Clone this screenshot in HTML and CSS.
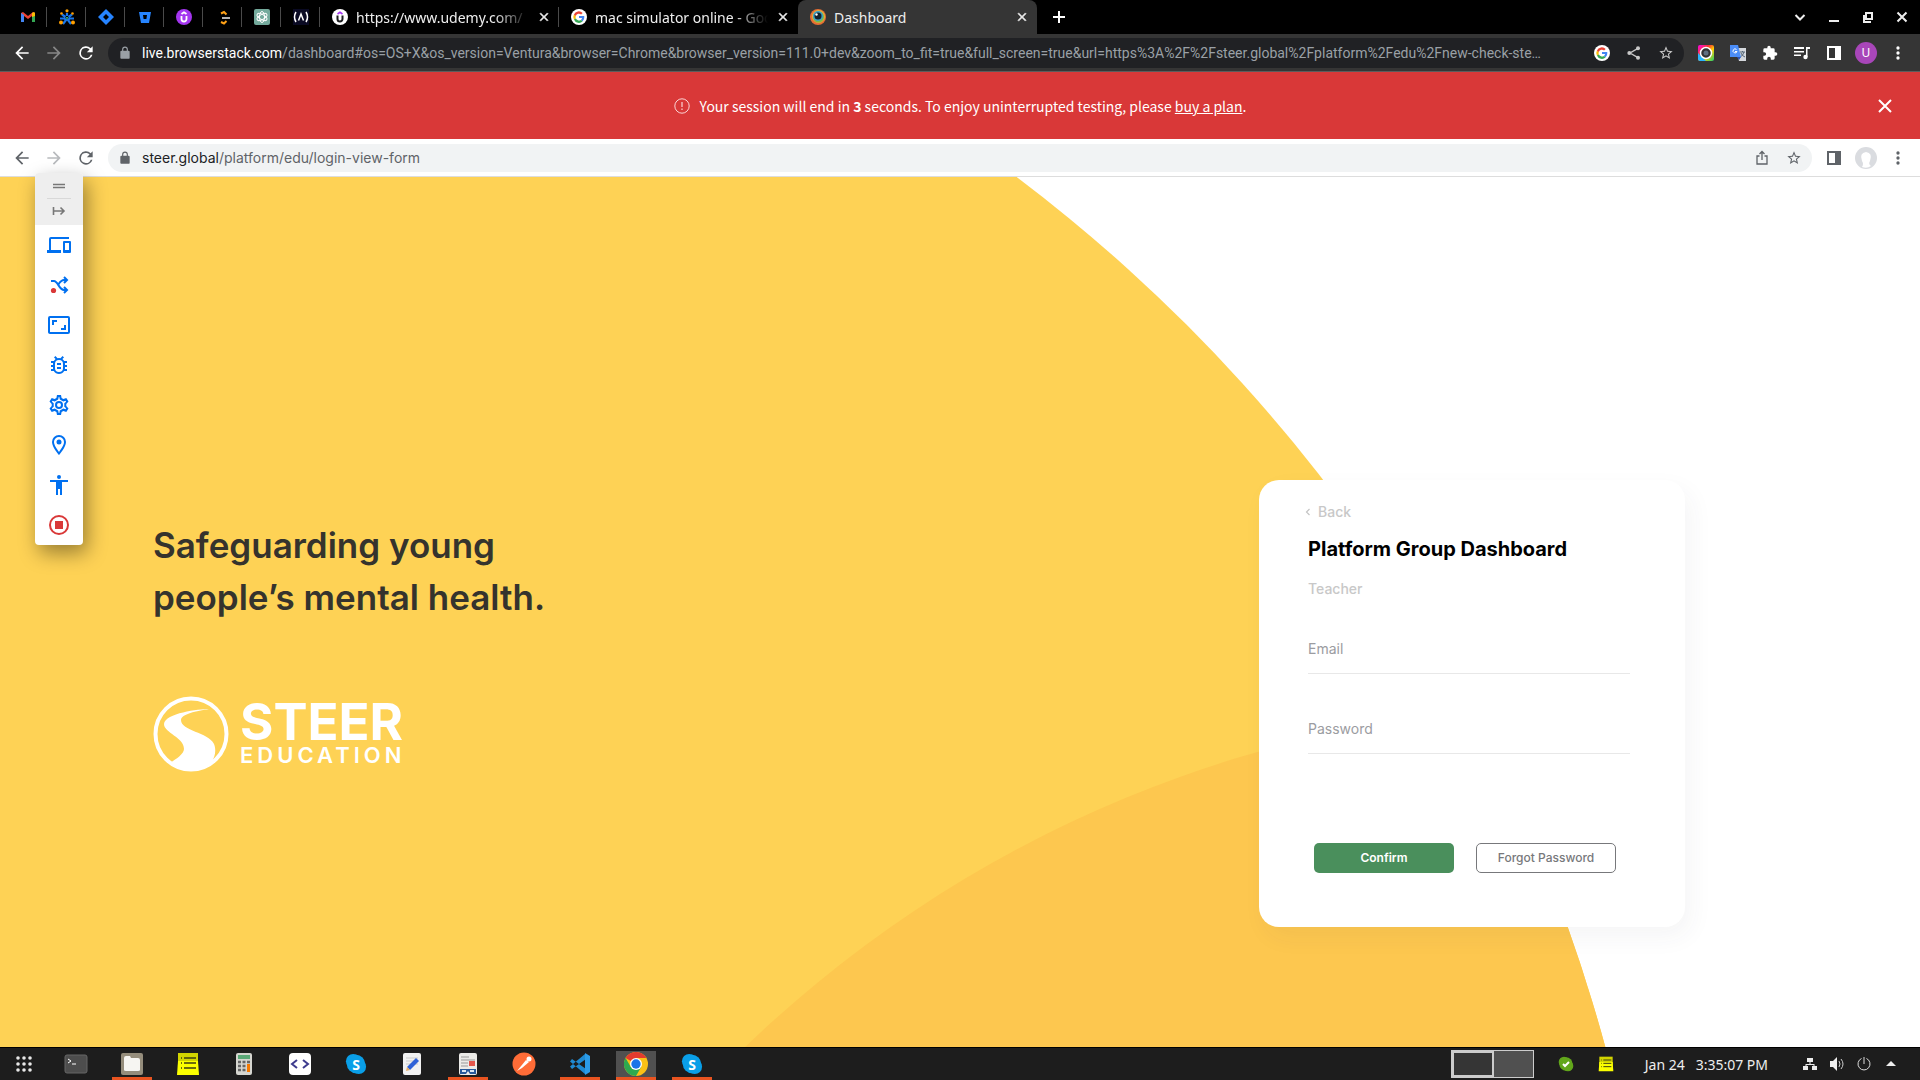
FILE: index.html
```html
<!DOCTYPE html>
<html lang="en">
<head>
<meta charset="utf-8">
<title>Dashboard</title>
<link rel="stylesheet" href="styles.css">
</head>
<body>
<svg class="defs" aria-hidden="true">
  <symbol id="back" viewBox="0 0 24 24"><path d="M20 11H7.8l5.6-5.6L12 4l-8 8 8 8 1.4-1.4L7.8 13H20z"/></symbol>
  <symbol id="fwd" viewBox="0 0 24 24"><path d="M12 4l-1.4 1.4 5.6 5.6H4v2h12.2l-5.6 5.6L12 20l8-8z"/></symbol>
  <symbol id="reload" viewBox="0 0 24 24"><path d="M17.65 6.35A8 8 0 1 0 19.73 14h-2.08A6 6 0 1 1 12 6c1.66 0 3.14.69 4.22 1.78L13 11h7V4z"/></symbol>
  <symbol id="lock" viewBox="0 0 24 24"><path d="M18 8h-1V6A5 5 0 0 0 7 6v2H6a2 2 0 0 0-2 2v10c0 1.100.9 2 2 2h12a2 2 0 0 0 2-2V10a2 2 0 0 0-2-2zM9 6a3 3 0 0 1 6 0v2H9z"/></symbol>
  <symbol id="close" viewBox="0 0 24 24"><path d="M19 6.400 17.600 5 12 10.600 6.400 5 5 6.400 10.600 12 5 17.600 6.400 19 12 13.400 17.600 19 19 17.600 13.400 12z" stroke="currentColor"/></symbol>
  <symbol id="star" viewBox="0 0 24 24"><path d="M22 9.240l-7.190-.62L12 2 9.190 8.630 2 9.240l5.460 4.730L5.820 21 12 17.270 18.180 21l-1.630-7.030L22 9.240zM12 15.400l-3.760 2.270 1-4.280-3.320-2.880 4.380-.38L12 6.100l1.710 4.040 4.380.38-3.320 2.880 1 4.280L12 15.400z"/></symbol>
  <symbol id="dots" viewBox="0 0 24 24"><path d="M12 8a2 2 0 1 0 0-4 2 2 0 0 0 0 4zm0 2a2 2 0 1 0 0 4 2 2 0 0 0 0-4zm0 6a2 2 0 1 0 0 4 2 2 0 0 0 0-4z"/></symbol>
  <symbol id="panel" viewBox="0 0 16 16"><path fill-rule="evenodd" d="M1 1h14v14H1zM3 3v10h6V3z"/></symbol>
  <symbol id="google" viewBox="0 0 16 16"><circle cx="8" cy="8" r="8" fill="#fff"/><path d="M8 6.900v2.200h3.100A2.800 2.800 0 0 1 9.900 10.900l1.700 1.400c1-1 1.700-2.400 1.700-4.200l-.1-1.200z" fill="#4285f4"/><path d="M4.800 9.300l-1.900 1.200A5.400 5.400 0 0 0 11.700 12.300L9.900 10.900a3.400 3.400 0 0 1-5.100-1.600z" fill="#34a853"/><path d="M2.900 5.600a5.400 5.400 0 0 0 0 4.900l1.900-1.200a3.500 3.500 0 0 1 0-2.400z" fill="#fbbc05"/><path d="M2.900 5.600A5.400 5.400 0 0 1 11.700 4L10.100 5.500A3.300 3.300 0 0 0 4.800 6.900z" fill="#ea4335"/></symbol>
  <symbol id="skype" viewBox="0 0 24 24"><circle cx="9" cy="9" r="8"/><circle cx="15" cy="15" r="8"/><circle cx="12" cy="12" r="10"/></symbol>
  <symbol id="notes" viewBox="0 0 24 24"><path d="M2 1h20v15H2z" fill="#d2d400"/><path d="M2 9h20l1 14H1z" fill="#fbff00"/><path d="M5 6h1M5 11h1M5 16h1M8 6h12M8 11h12M8 16h12" stroke="#3e3e10" stroke-width="1.500"/></symbol>
</svg>

<header class="browser">
  <nav class="tabs" aria-label="Tabs">
    <a class="pin" href="#"><svg viewBox="0 0 16 16"><path d="M1 4v9h3V7l4 3 4-3v6h3V4l-2-1-5 4-5-4z" fill="#ea4335"/><path d="M1 4v9h3V6z" fill="#4285f4"/><path d="M15 4v9h-3V6z" fill="#34a853"/><path d="M12 4l2-1 1 1v3l-3 1z" fill="#fbbc04"/></svg></a>
    <a class="pin" href="#"><svg viewBox="0 0 16 16"><path d="M8 4v3M3 5.500l3.500 2.500M13 5.500L9.500 8M1 9.500h4.500L7 11l-3 4M15 9.500h-4.500L9 11l3 4" stroke="#1976e8" stroke-width="2.200" fill="none"/><path d="M6.500 8h3L8 11z" fill="#2f9e6e"/><g fill="#ffa000"><circle cx="8" cy="1.800" r="1.600"/><circle cx="2.500" cy="4.500" r="1.300"/><circle cx="13.500" cy="4.500" r="1.300"/><circle cx="2" cy="13.500" r="2"/><circle cx="14" cy="13.500" r="2"/></g></svg></a>
    <a class="pin" href="#"><svg viewBox="0 0 16 16"><path fill-rule="evenodd" fill="#2684ff" d="M8 0l8 8-8 8-8-8zM8 5L5 8l3 3 3-3z"/></svg></a>
    <a class="pin" href="#"><svg viewBox="0 0 16 16"><path fill-rule="evenodd" fill="#2684ff" d="M2 3h12l-2 11H4zM6 6l.6 4h2.800L10 6z"/></svg></a>
    <a class="pin" href="#"><svg viewBox="0 0 16 16"><circle cx="8" cy="8" r="8" fill="#a435f0"/><path d="M5.500 5L8 3.300 10.500 5M5.500 7v3a2.500 2.500 0 0 0 5 0V7" fill="none" stroke="#fff" stroke-width="1.800"/></svg></a>
    <a class="pin" href="#"><svg viewBox="0 0 16 16"><g fill="none" stroke-width="2"><path d="M6 4.500l3-1.500 2.500 2.500M6 13l3 1.500 2.500-2.500" stroke="#ffa116"/><path d="M7 9h8" stroke="#b3b3b3"/></g></svg></a>
    <a class="pin" href="#"><svg viewBox="0 0 16 16"><rect width="16" height="16" rx="2" fill="#74aa9c"/><g fill="none" stroke="#fff"><ellipse cx="8" cy="8" rx="2.500" ry="5.500"/><ellipse cx="8" cy="8" rx="2.500" ry="5.500" transform="rotate(60 8 8)"/><ellipse cx="8" cy="8" rx="2.500" ry="5.500" transform="rotate(120 8 8)"/></g></svg></a>
    <a class="pin" href="#"><svg viewBox="0 0 16 16"><path fill="#0a0a23" d="M0 0h16v16H0z"/><path d="M3 3q-3 5 0 10M13 3q3 5 0 10M5.500 11.500L8 5l2.500 6.500" fill="none" stroke="#fff" stroke-width="1.500"/></svg></a>
    <div class="tab">
      <svg viewBox="0 0 16 16"><circle cx="8" cy="8" r="8" fill="#fff"/><path d="M5.500 5L8 3.300 10.500 5" fill="none" stroke="#a435f0" stroke-width="1.600"/><path d="M5.500 6.500V10a2.500 2.500 0 0 0 5 0V6.500" fill="none" stroke="#1c1d1f" stroke-width="2"/></svg>
      <a href="#" class="fade">https://www.udemy.com/</a>
      <button aria-label="Close tab"><svg viewBox="0 0 24 24"><use href="#close"/></svg></button>
    </div>
    <div class="tab">
      <svg><use href="#google"/></svg>
      <a href="#" class="fade">mac simulator online - Goo</a>
      <button aria-label="Close tab"><svg viewBox="0 0 24 24"><use href="#close"/></svg></button>
    </div>
    <div class="tab active">
      <svg viewBox="0 0 16 16"><circle cx="8" cy="8" r="8" fill="#e66f32"/><circle cx="8.500" cy="7.500" r="6.500" fill="#e2b03a"/><circle cx="8.500" cy="8" r="5.500" fill="#79b849"/><circle cx="8" cy="7" r="5" fill="#3b9fc9"/><circle cx="8" cy="7" r="3.500" fill="#13202b"/><circle cx="6.500" cy="5.500" r="1.200" fill="#fff"/></svg>
      <a href="#">Dashboard</a>
      <button aria-label="Close tab"><svg viewBox="0 0 24 24"><use href="#close"/></svg></button>
    </div>
    <button class="newtab" aria-label="New tab"><svg viewBox="0 0 12 12"><path d="M6 0v12M0 6h12" stroke="#fff" stroke-width="2"/></svg></button>
    <div class="window">
      <button aria-label="Search tabs"><svg viewBox="0 0 14 14"><path d="M2.500 5l4.500 4.500L11.500 5" fill="none" stroke="#eee" stroke-width="2"/></svg></button>
      <button aria-label="Minimize"><svg viewBox="0 0 14 14"><path d="M2 11h10" stroke="#eee" stroke-width="2"/></svg></button>
      <button aria-label="Restore"><svg viewBox="0 0 14 14"><path d="M5 3h6v6H5zM3 5v7h7" fill="none" stroke="#eee" stroke-width="2"/></svg></button>
      <button aria-label="Close window"><svg viewBox="0 0 14 14"><path d="M2.500 2.500l9 9M11.500 2.500l-9 9" stroke="#eee" stroke-width="2"/></svg></button>
    </div>
  </nav>

  <div class="bar dark">
    <button aria-label="Back"><svg><use href="#back"/></svg></button>
    <button class="dim" aria-label="Forward"><svg><use href="#fwd"/></svg></button>
    <button aria-label="Reload"><svg><use href="#reload"/></svg></button>
    <div class="address">
      <svg class="lock"><use href="#lock"/></svg>
      <div class="url"><b>live.browserstack.com</b>/dashboard#os=OS+X&amp;os_version=Ventura&amp;browser=Chrome&amp;browser_version=111.0+dev&amp;zoom_to_fit=true&amp;full_screen=true&amp;url=https%3A%2F%2Fsteer.global%2Fplatform%2Fedu%2Fnew-check-ste…</div>
      <button aria-label="Google"><svg class="s16"><use href="#google"/></svg></button>
      <button class="soft" aria-label="Share"><svg class="s16" viewBox="0 0 24 24"><path d="M18 5L6 12l12 7" fill="none" stroke="currentColor" stroke-width="2"/><circle cx="18" cy="5" r="3"/><circle cx="5" cy="12" r="3"/><circle cx="18" cy="19" r="3"/></svg></button>
      <button class="soft" aria-label="Bookmark"><svg class="s16"><use href="#star"/></svg></button>
    </div>
    <button aria-label="Camera"><svg class="s16" viewBox="0 0 16 16"><defs><linearGradient id="rb" x2="1" y2="1"><stop stop-color="#f0e"/><stop offset=".35" stop-color="#f83232"/><stop offset=".6" stop-color="#ffd000"/><stop offset="1" stop-color="#20d070"/></linearGradient></defs><rect width="16" height="16" rx="2" fill="url(#rb)"/><path d="M0 8l8 8H2a2 2 0 0 1-2-2z" fill="#28b5ff"/><circle cx="8" cy="8" r="5.500" fill="#333" stroke="#fff" stroke-width="1.500"/><circle cx="8" cy="8" r="2.500" fill="#607080"/></svg></button>
    <button aria-label="Translate"><svg class="s16" viewBox="0 0 16 16"><path d="M6 3h10v13H9z" fill="#d5d8dc"/><path d="M10 7h5M12.500 6v1M14 7q-1 4-4 5M11 8q1 3 4 4" stroke="#567" fill="none"/><path d="M0 0h8l3 12H0z" fill="#4b8df8"/><path d="M7 12h4l-2 3z" fill="#2b51b5"/><path d="M6.500 4.500A2 2 0 1 0 7 6.500H5" stroke="#fff" fill="none"/></svg></button>
    <button aria-label="Extensions"><svg class="s16" viewBox="0 0 24 24"><path d="M20.500 11H19V7a2 2 0 0 0-2-2h-4V3.500a2.500 2.500 0 0 0-5 0V5H4a2 2 0 0 0-2 2v3.800h1.500a2.700 2.700 0 0 1 0 5.400H2V20c0 1.100.9 2 2 2h3.800v-1.500a2.700 2.700 0 0 1 5.400 0V22H17a2 2 0 0 0 2-2v-4h1.500a2.500 2.500 0 0 0 0-5z"/></svg></button>
    <button aria-label="Media"><svg class="s16" viewBox="0 0 16 16"><path d="M0 2h10v2H0zM0 6h10v1.600H0zM0 9.500h7v1.600H0zM12 2h4v2h-2.500v8H12z"/><circle cx="11.500" cy="12" r="2.200"/></svg></button>
    <button aria-label="Side panel"><svg class="s16"><use href="#panel"/></svg></button>
    <button class="avatar" aria-label="Profile">U</button>
    <button aria-label="Menu"><svg><use href="#dots"/></svg></button>
  </div>
</header>

<section class="alert" role="alert">
  <svg viewBox="0 0 16 16"><circle cx="8" cy="8" r="7.200" fill="none" stroke="#fbd5d5"/><path d="M8 4v5M8 10.500v1.500" stroke="#fbd5d5" stroke-width="1.200"/></svg>
  <p>Your session will end in <strong>3</strong> seconds. To enjoy uninterrupted testing, please <a href="#">buy a plan</a>.</p>
  <button aria-label="Dismiss"><svg viewBox="0 0 14 14"><path d="M1 1l12 12M13 1L1 13" stroke="#fff" stroke-width="2"/></svg></button>
</section>

<div class="bar light">
  <button aria-label="Back"><svg><use href="#back"/></svg></button>
  <button class="dim" aria-label="Forward"><svg><use href="#fwd"/></svg></button>
  <button aria-label="Reload"><svg><use href="#reload"/></svg></button>
  <div class="address">
    <svg class="lock"><use href="#lock"/></svg>
    <div class="url"><b>steer.global</b>/platform/edu/login-view-form</div>
    <button aria-label="Share"><svg class="s16" viewBox="0 0 16 16"><path d="M5.500 6H3v8h10V6h-2.500M8 10V2M5.500 4L8 1.500 10.500 4" fill="none" stroke="currentColor" stroke-width="1.300"/></svg></button>
    <button aria-label="Bookmark"><svg class="s16"><use href="#star"/></svg></button>
  </div>
  <button aria-label="Side panel"><svg class="s16"><use href="#panel"/></svg></button>
  <button class="avatar blank" aria-label="Guest"><svg viewBox="0 0 22 22"><path d="M7 20q2-3 0-6-3-8 4-9 7 1 4 9-2 3 1 5-4 3-9 1z" fill="#fff"/></svg></button>
  <button aria-label="Menu"><svg><use href="#dots"/></svg></button>
</div>

<main class="page">
  <svg class="backdrop" viewBox="0 0 1920 870" preserveAspectRatio="xMinYMin slice" aria-hidden="true">
    <clipPath id="sun"><circle cx="40" cy="1295" r="1622"/></clipPath>
    <circle cx="40" cy="1295" r="1622" fill="#fed255"/>
    <circle cx="1593" cy="1750" r="1222" fill="#fdc74f" clip-path="url(#sun)"/>
  </svg>

  <aside class="toolbox">
    <div class="grip">
      <svg viewBox="0 0 24 24"><path d="M6 10.500h12M6 13.500h12" stroke="#777" stroke-width="1.500"/></svg>
      <button aria-label="Dock"><svg viewBox="0 0 24 24"><path d="M6.500 8v8M7 12h10M13.500 8.500L17 12l-3.500 3.500" fill="none" stroke="#777" stroke-width="1.600"/></svg></button>
    </div>
    <button aria-label="Devices"><svg viewBox="0 0 24 24"><path d="M4 6h18V4H4a2 2 0 0 0-2 2v11H0v3h14v-3H4zm19 2h-6a1 1 0 0 0-1 1v10c0 .6.400 1 1 1h6a1 1 0 0 0 1-1V9a1 1 0 0 0-1-1zm-1 9h-4v-7h4z"/></svg></button>
    <button aria-label="Switch"><svg viewBox="0 0 24 24"><path d="M4 8h3c4 0 5 9 10 9h2M11 12c2-3 3-5 6-5h2M17 4l3 3-3 3M17 14l3 3-3 3" fill="none" stroke="currentColor" stroke-width="2"/><circle cx="6.500" cy="17.500" r="2.600" fill="#d93838"/></svg></button>
    <button aria-label="Resolution"><svg viewBox="0 0 24 24"><path d="M19 12h-2v3h-3v2h5zM7 9h3V7H5v5h2zm14-6H3a2 2 0 0 0-2 2v14c0 1.100.9 2 2 2h18a2 2 0 0 0 2-2V5a2 2 0 0 0-2-2zm0 16H3V5h18z"/></svg></button>
    <button aria-label="Bug report"><svg viewBox="0 0 24 24"><path d="M20 8h-2.810a5.990 5.990 0 0 0-1.820-1.960L17 4.410 15.590 3l-2.170 2.170a6 6 0 0 0-2.840 0L8.410 3 7 4.410l1.620 1.630C7.880 6.550 7.260 7.220 6.810 8H4v2h2.090c-.05.33-.09.66-.09 1v1H4v2h2v1c0 .34.040.67.090 1H4v2h2.810a6 6 0 0 0 10.380 0H20v-2h-2.090c.05-.33.090-.66.090-1v-1h2v-2h-2v-1c0-.34-.04-.67-.09-1H20V8zm-4 7a4 4 0 0 1-8 0v-4a4 4 0 0 1 8 0v4zm-6-1h4v2h-4zm0-4h4v2h-4z"/></svg></button>
    <button aria-label="Settings"><svg viewBox="0 0 24 24"><path fill-rule="evenodd" d="M10 2h4l.6 3 1.800 1 2.900-1 2.200 3.500L19.300 11v2l2.200 2.500-2.200 3.500-2.900-1-1.800 1-.6 3h-4l-.6-3-1.800-1-2.900 1-2.200-3.500L4.700 13v-2L2.500 8.500 4.700 5l2.900 1 1.800-1zM11.700 4l-.5 2.500-3.500 2L5.500 7.700l-.6 1L6.700 10.300v3.400L4.900 15.300l.6 1 2.200-.8 3.500 2 .5 2.500h.6l.5-2.500 3.500-2 2.200.8.6-1-1.800-1.600v-3.400l1.800-1.600-.6-1-2.200.8-3.500-2L12.300 4z"/><circle cx="12" cy="12" r="3" fill="none" stroke="currentColor" stroke-width="2"/></svg></button>
    <button aria-label="Location"><svg viewBox="0 0 24 24"><path d="M12 2a7 7 0 0 0-7 7c0 5.250 7 13 7 13s7-7.750 7-13a7 7 0 0 0-7-7zM7 9a5 5 0 0 1 10 0c0 2.880-2.880 7.190-5 9.880C9.920 16.210 7 11.850 7 9z"/><circle cx="12" cy="9" r="2.500"/></svg></button>
    <button aria-label="Accessibility"><svg viewBox="0 0 24 24"><path d="M12 2a2 2 0 1 1 0 4 2 2 0 0 1 0-4zm9 7h-6v13h-2v-6h-2v6H9V9H3V7h18z"/></svg></button>
    <button aria-label="Stop session"><svg viewBox="0 0 24 24" fill="#d93838"><circle cx="12" cy="12" r="9" fill="none" stroke="#d93838" stroke-width="2"/><path d="M8 8h8v8H8z"/></svg></button>
  </aside>

  <section class="brand">
    <h1>Safeguarding young<br>people’s mental health.</h1>
    <div class="logo">
      <svg viewBox="0 0 76 76" aria-hidden="true"><circle cx="38" cy="38" r="35.500" fill="none" stroke="#fff" stroke-width="4"/><path d="M56 13C46 13 12 17 11 28c0 9 20 13 20 25 0 5-8 10-14 14 9 8 30 10 41 0 5-7 5-14 3-19C55 36 28 35 28 24c0-6 16-9 28-11z" fill="#fff"/></svg>
      <p><span class="steer">STEER</span><span class="edu">EDUCATION</span></p>
    </div>
  </section>

  <form class="card">
    <a class="back" href="#"><svg viewBox="0 0 6 8"><path d="M4.500 1L1.500 4l3 3" fill="none" stroke="#c4c4c4" stroke-width="1.200"/></svg>Back</a>
    <h2>Platform Group Dashboard</h2>
    <p class="role">Teacher</p>
    <div class="field"><label for="email">Email</label><input id="email" type="email"></div>
    <div class="field"><label for="password">Password</label><input id="password" type="password"></div>
    <div class="actions">
      <button class="confirm" type="submit">Confirm</button>
      <button class="forgot" type="button">Forgot Password</button>
    </div>
  </form>
</main>

<footer class="taskbar">
  <div class="apps">
    <button aria-label="Show applications"><svg viewBox="0 0 24 24" fill="#e8e8e8"><g id="r"><circle cx="6" cy="6" r="1.800"/><circle cx="12" cy="6" r="1.800"/><circle cx="18" cy="6" r="1.800"/></g><use href="#r" y="6"/><use href="#r" y="12"/></svg></button>
    <button aria-label="Terminal"><svg viewBox="0 0 24 24"><rect x="1" y="3" width="22" height="18" rx="2" fill="#4d4d4d" stroke="#666"/><path d="M4 7l3 2-3 2M8 12h4" fill="none" stroke="#fff"/></svg></button>
    <button class="open" aria-label="Files"><svg viewBox="0 0 24 24"><rect x="1" y="1" width="22" height="22" rx="2" fill="#958d7c"/><path d="M4 6q0-2 2-2h4l1 2h7q2 0 2 2v10q0 1-2 1H6q-2 0-2-1z" fill="#f6f5f2"/></svg></button>
    <button aria-label="Notes"><svg><use href="#notes"/></svg></button>
    <button aria-label="Calculator"><svg viewBox="0 0 24 24"><rect x="4" y="1" width="16" height="22" rx="2" fill="#d6d6d0"/><path d="M6 3h12v4H6z" fill="#5aa876"/><path d="M6 10h3M10.500 10h3M15 10h3M6 14h3M10.500 14h3M6 18h3M10.500 18h3" stroke="#666" stroke-width="2.500"/><path d="M15 12h3v8h-3z" fill="#f57900"/></svg></button>
    <button aria-label="Code editor"><svg viewBox="0 0 24 24"><rect x="1" y="1" width="22" height="22" rx="4" fill="#fff"/><path d="M9 8l-5 4 5 4M15 8l5 4-5 4" fill="none" stroke="#3d3b8e" stroke-width="2"/></svg></button>
    <button class="letter" aria-label="Skype"><svg fill="#0a9fe8"><use href="#skype"/></svg><span>S</span></button>
    <button aria-label="Text editor"><svg viewBox="0 0 24 24"><rect x="3" y="1" width="18" height="22" rx="2" fill="#f2f2f2"/><path d="M6 6h12M6 9h12M6 12h12" stroke="#ccc"/><path d="M16 6l3 3-9 9-3-3z" fill="#2f62d8"/><path d="M7 15l3 3-4 1z" fill="#e5ad68"/></svg></button>
    <button class="open" aria-label="Document viewer"><svg viewBox="0 0 24 24"><rect x="3" y="1" width="18" height="22" rx="2" fill="#ecebe8"/><path d="M5 5h8M5 8h14M5 11h7M5 14h7" stroke="#999"/><path d="M13 9h6v5h-6z" fill="#e4574c"/><path d="M4 17h16v5h-6l-2-3-2 3H4z" fill="#285a9b"/><path d="M6 19h4M14 19h4" stroke="#dbe8f5" stroke-width="2"/></svg></button>
    <button aria-label="Postman"><svg viewBox="0 0 24 24"><circle cx="12" cy="12" r="11.500" fill="#ff6c37"/><path d="M5 19l9-11 3 2-7 6z" fill="#fff"/><circle cx="17" cy="7" r="2.500" fill="#fff"/></svg></button>
    <button class="open" aria-label="Visual Studio Code"><svg viewBox="0 0 24 24"><path d="M17 2L2 14.500 4 17 18 7M17 22L2 9.500 4 7l14 10" fill="#1f8ad2"/><path d="M17 1l5 3v16l-5 3z" fill="#2b9be8"/></svg></button>
    <button class="open current" aria-label="Chrome"><svg viewBox="0 0 24 24"><circle cx="12" cy="12" r="12" fill="#fbc116"/><path d="M12 12L1.600 6A12 12 0 0 1 22.400 6H12z" fill="#e33b2e"/><path d="M1.600 6A12 12 0 0 0 12 24l5.200-9L12 12 6.800 15z" fill="#2da94f"/><circle cx="12" cy="12" r="6" fill="#fff"/><circle cx="12" cy="12" r="4.700" fill="#1a73e8"/></svg></button>
    <button class="open letter" aria-label="Skype window"><svg fill="#0a9fe8"><use href="#skype"/></svg><span>S</span></button>
  </div>
  <div class="tray">
    <div class="desks"><button class="on" aria-label="Workspace 1"></button><button aria-label="Workspace 2"></button></div>
    <button class="status" aria-label="Skype status"><svg fill="#62a61b"><use href="#skype"/></svg><svg class="check" viewBox="0 0 16 16"><path d="M5 8l2 2 4-4" fill="none" stroke="#fff" stroke-width="2"/></svg></button>
    <button class="status" aria-label="Notes indicator"><svg><use href="#notes"/></svg></button>
    <time>Jan 24&nbsp;&nbsp; 3:35:07 PM</time>
    <button aria-label="Network"><svg viewBox="0 0 16 16" fill="#eee"><path d="M5 2h6v4H5zM1 10h5v4H1zM10 10h5v4h-5zM7.500 6h1v2h4v2h-1V9h-7v1h-1V8h4z"/></svg></button>
    <button aria-label="Volume"><svg viewBox="0 0 16 16" fill="#eee"><path d="M1 5h3l4-4v14l-4-4H1z"/><path d="M10 5q2 3 0 6M12 3q4 5 0 10" fill="none" stroke="#ccc"/></svg></button>
    <button aria-label="Power"><svg viewBox="0 0 16 16" fill="none" stroke="#ddd"><path d="M5.500 2.500a6 6 0 1 0 5 0M8 1v7"/></svg></button>
    <button aria-label="System menu"><svg viewBox="0 0 16 16" fill="#eee"><path d="M3 10l5-5 5 5z"/></svg></button>
  </div>
</footer>
</body>
</html>
```
FILE: styles.css
```css
* { box-sizing: border-box; }
body { margin: 0; min-height: 100vh; display: flex; flex-direction: column; background: #fff; font-family: "Noto Sans", sans-serif; font-size: 14px; }
button { border: 0; padding: 0; background: none; color: inherit; font: inherit; display: flex; align-items: center; justify-content: center; }
a { color: inherit; text-decoration: none; }
h1, h2, p { margin: 0; }
svg { display: block; flex: none; }
svg:not([fill]) { fill: currentColor; }
.defs { position: absolute; width: 0; height: 0; }

/* tab strip */
.tabs { display: flex; height: 34px; padding-left: 8px; background: #000; color: #eee; }
.pin { width: 39px; display: flex; align-items: center; justify-content: center; position: relative; }
.pin svg, .tab > svg { width: 16px; height: 16px; }
.pin::after, .tab:not(.active):not(:has(+ .active))::after { content: ""; position: absolute; right: 0; top: 7px; width: 1px; height: 20px; background: #4a4a4a; }
.tab { width: 239px; display: flex; align-items: center; gap: 8px; padding: 0 8px 0 12px; position: relative; }
.tab a { flex: 1; min-width: 0; overflow: hidden; white-space: nowrap; }
.tab button svg { width: 14px; height: 14px; }
.fade { mask-image: linear-gradient(90deg, #000 80%, transparent); }
.active { background: #353535; border-radius: 8px 8px 0 0; }
.newtab { width: 44px; }
.newtab svg { width: 12px; height: 12px; }
.window { margin-left: auto; display: flex; gap: 20px; padding-right: 11px; }
.window svg { width: 14px; height: 14px; }

/* address bars */
.bar { display: flex; align-items: center; padding: 0 6px; }
.bar > button { width: 32px; height: 32px; }
.bar svg { width: 20px; height: 20px; }
.bar .s16 { width: 16px; height: 16px; }
.bar .lock { width: 14px; height: 14px; margin: 0 10px; }
.dark { height: 38px; background: #353535; border-bottom: 1px solid #5c5c5c; color: #fff; }
.dark .dim { color: #888; }
.address { flex: 1; min-width: 0; display: flex; align-items: center; height: 30px; border-radius: 15px; margin: 0 6px; padding-right: 2px; }
.address button { width: 32px; height: 30px; }
.dark .address { background: #202124; color: #9aa0a6; font-family: Roboto, sans-serif; font-size: 14px; }
.dark .soft { color: #c8c8c8; }
.url { flex: 1; min-width: 0; overflow: hidden; text-overflow: ellipsis; white-space: nowrap; }
.url b { font-weight: 400; color: #fff; }
.bar .avatar { width: 22px; height: 22px; margin: 0 5px; border-radius: 50%; background: #a846b9; font-size: 12px; }
.light { height: 38px; background: #fff; color: #5f6368; border-bottom: 1px solid #ddd; }
.light .dim { color: #b8babd; }
.light .address { height: 28px; background: #f1f3f4; font-family: Inter, sans-serif; font-size: 14px; }
.light .url b { color: #202124; }
.bar .blank { background: #dadce0; }
.bar .blank svg { width: 22px; height: 22px; }

/* session notice */
.alert { position: relative; height: 67px; display: flex; align-items: center; justify-content: center; gap: 10px; background: #d93838; color: #fff; font-family: "Noto Sans CJK SC", sans-serif; font-size: 14px; }
.alert a { text-decoration: underline; }
.alert > svg { width: 16px; height: 16px; }
.alert button { position: absolute; right: 28px; top: 27px; }
.alert button svg { width: 14px; height: 14px; }

/* remote page */
.page { position: relative; flex: 1; display: flex; justify-content: space-between; align-items: flex-start; padding: 303px 235px 120px 153px; font-family: Inter, sans-serif; }
.backdrop { position: absolute; inset: 0; width: 100%; height: 100%; }
.toolbox { position: absolute; left: 35px; top: -4px; width: 48px; border-radius: 4px; background: #fff; color: #0070f0; box-shadow: 4px 8px 20px rgba(0, 0, 0, .4); }
.toolbox > button { width: 48px; height: 40px; }
.toolbox > button svg { width: 24px; height: 24px; }
.grip { height: 52px; display: flex; flex-direction: column; align-items: center; padding-top: 1px; background: #eee; border-radius: 4px 4px 0 0; }
.grip svg { width: 24px; height: 24px; }
.grip button { border-top: 1px solid #d8d8d8; }
.brand { position: relative; padding-top: 39px; }
.brand h1 { font-size: 35px; line-height: 52px; font-weight: 600; color: #35332d; }
.logo { display: flex; gap: 11px; margin-top: 73px; color: #fff; }
.logo svg { width: 76px; height: 76px; }
.logo p { display: flex; flex-direction: column; padding-top: 7px; }
.steer { font-size: 51px; line-height: 38px; font-weight: 700; }
.edu { font-size: 22px; line-height: 28px; font-weight: 600; letter-spacing: 4px; }
.card { position: relative; width: 426px; height: 447px; padding: 22px 55px 0 49px; display: flex; flex-direction: column; background: #fff; border-radius: 20px; box-shadow: 6px 10px 24px rgba(60, 60, 80, .05); color: #c8c8c8; font-size: 14px; line-height: 20px; }
.back { display: flex; align-items: center; gap: 7px; font-weight: 500; }
.back svg { width: 6px; height: 8px; margin-left: -3px; }
.card h2 { margin-top: 13px; font-size: 20px; line-height: 28px; font-weight: 700; color: #000; }
.role { margin-top: 16px; font-weight: 500; }
.field { display: grid; margin-top: 25px; }
.field + .field { margin-top: 30px; }
.field label, .field input { grid-area: 1 / 1; }
.field label { z-index: 1; align-self: center; justify-self: start; color: #9b9ca1; pointer-events: none; }
.field input { height: 50px; padding: 0; border: 0; border-bottom: 1px solid #e8e8e8; background: none; font: 400 14px Inter, sans-serif; }
.actions { display: flex; gap: 22px; margin: 89px 6px 0; }
.actions button { width: 140px; height: 30px; border-radius: 5px; font-size: 12px; font-weight: 500; }
.confirm { background: #4a8f5c; color: #fff; }
.actions .confirm { font-weight: 600; }
.actions .forgot { border: 1px solid #77787b; color: #77787b; }

/* desktop panel */
.taskbar { display: flex; justify-content: space-between; height: 33px; background: #1d1d1d; border-top: 1px solid #000; color: #eee; }
.apps { display: flex; gap: 16px; padding-left: 4px; }
.apps button { width: 40px; border-bottom: 3px solid transparent; border-top: 3px solid transparent; }
.apps button:first-child { margin-right: -4px; }
.apps svg { width: 24px; height: 24px; }
.apps .open { border-bottom-color: #e95420; }
.current { background: #505050 padding-box; }
.letter { position: relative; }
.letter svg { width: 22px; height: 22px; }
.letter span { position: absolute; inset: 0; display: flex; align-items: center; justify-content: center; color: #fff; font-size: 14px; font-weight: 700; }
.tray { display: flex; align-items: center; gap: 11px; padding-right: 21px; }
.tray svg { width: 16px; height: 16px; }
.tray time { margin: 0 23px 0 20px; font-size: 14px; }
.status { width: 16px; margin-left: 13px; position: relative; }
.status .check { position: absolute; }
.desks { display: flex; width: 83px; height: 28px; border: 1px solid #ccc; background: #505050; }
.desks button { flex: 1; }
.desks .on { background: #353535; border: 2px solid #ccc; }
```
